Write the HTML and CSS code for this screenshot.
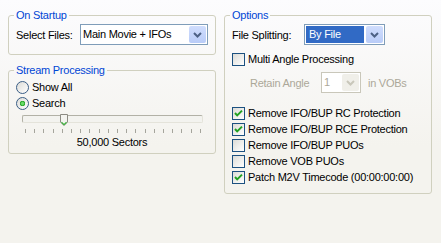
FILE: index.html
```html
<!DOCTYPE html>
<html>
<head>
    <meta charset="utf-8">
    <link rel="stylesheet" href="styles.css">
</head>
<body>
    <div class="page">
        <div class="col">
            <fieldset class="group startup">
                <legend>On Startup</legend>
                <div class="field">
                    <span class="field-label files-label">Select Files:</span>
                    <div class="combo files-combo">
                        <span class="combo-text">Main Movie + IFOs</span>
                        <span class="combo-btn">
                            <svg width="9" height="6" viewBox="0 0 9 6"><path d="M1 1 L4.5 4.5 L8 1" fill="none" stroke="#4D6185" stroke-width="2"/></svg>
                        </span>
                    </div>
                </div>
            </fieldset>

            <fieldset class="group stream">
                <legend>Stream Processing</legend>
                <div class="opt-row"><span class="radio"></span>Show All</div>
                <div class="opt-row"><span class="radio on"></span>Search</div>
                <div class="slider">
                    <div class="track">
                        <svg class="thumb" width="8" height="12" viewBox="0 0 8 12">
                            <path d="M0.5 0.5 H7.5 V8 L4 11.5 L0.5 8 Z" fill="#F4F4F0" stroke="#8C8B83"/>
                            <path d="M1.5 8.2 L4 10.6 L6.5 8.2" fill="none" stroke="#3FB13F" stroke-width="1.2"/>
                        </svg>
                    </div>
                    <div class="ticks">
                        <span></span><span></span><span></span><span></span><span></span>
                        <span></span><span></span><span></span><span></span><span></span>
                        <span></span><span></span><span></span><span></span><span></span>
                        <span></span><span></span><span></span><span></span><span></span>
                    </div>
                    <div class="caption">50,000 Sectors</div>
                </div>
            </fieldset>
        </div>

        <div class="col">
            <fieldset class="group options">
                <legend>Options</legend>
                <div class="field">
                    <span class="field-label split-label">File Splitting:</span>
                    <div class="combo split-combo">
                        <span class="combo-text"><span class="selected">By File</span></span>
                        <span class="combo-btn">
                            <svg width="9" height="6" viewBox="0 0 9 6"><path d="M1 1 L4.5 4.5 L8 1" fill="none" stroke="#4D6185" stroke-width="2"/></svg>
                        </span>
                    </div>
                </div>
                <div class="opt-row angle-row"><span class="check"></span>Multi Angle Processing</div>
                <div class="field retain-row">
                    <span class="field-label retain-label">Retain Angle</span>
                    <div class="combo angle-combo disabled">
                        <span class="combo-text">1</span>
                        <span class="combo-btn">
                            <svg width="9" height="6" viewBox="0 0 9 6"><path d="M1 1 L4.5 4.5 L8 1" fill="none" stroke="#C9C7BA" stroke-width="2"/></svg>
                        </span>
                    </div>
                    <span class="field-label vobs-label">in VOBs</span>
                </div>
                <div class="checks">
                    <div class="opt-row"><span class="check on"></span>Remove IFO/BUP RC Protection</div>
                    <div class="opt-row"><span class="check on"></span>Remove IFO/BUP RCE Protection</div>
                    <div class="opt-row"><span class="check"></span>Remove IFO/BUP PUOs</div>
                    <div class="opt-row"><span class="check"></span>Remove VOB PUOs</div>
                    <div class="opt-row"><span class="check on"></span>Patch M2V Timecode (00:00:00:00)</div>
                </div>
            </fieldset>
        </div>
    </div>
</body>
</html>
```

FILE: styles.css
```css
html,
body {
    margin: 0;
    width: 441px;
    height: 243px;
    background: linear-gradient(#FCFCFE, #F4F3EE 60%);
    font-family: "Liberation Sans", Arial, sans-serif;
    font-size: 11px;
    letter-spacing: -0.25px;
    color: #000;
}

.page {
    display: flex;
    gap: 8px;
    padding: 8px 0 0 8px;
}

.col {
    width: 208px;
    display: flex;
    flex-direction: column;
    gap: 8px;
}

.group {
    margin: 0;
    min-width: 0;
    padding: 2px 7px 9px 7px;
    border: 1px solid #D0D0BF;
    border-radius: 3px;
}
.group legend {
    color: #0046D5;
    line-height: 14px;
    padding: 0 2px;
    margin-left: -2px;
}

.stream {
    padding-bottom: 4px;
}
.options {
    padding-bottom: 8px;
}

/* label + combo rows */
.field {
    display: flex;
    align-items: center;
    height: 21px;
}
.field-label {
    flex: none;
}
.files-label { width: 64px; }
.split-label { width: 72px; }

.combo {
    height: 21px;
    box-sizing: border-box;
    border: 1px solid #7F9DB9;
    background: #fff;
    display: flex;
}
.files-combo { width: 129px; }
.split-combo { width: 81px; }

.combo-text {
    flex: 1;
    line-height: 19px;
    padding-left: 2px;
    white-space: nowrap;
    overflow: hidden;
}
.combo-btn {
    width: 17px;
    margin: 1px;
    border-radius: 2px;
    background: linear-gradient(#D0DDFD, #B9CCF8);
    display: flex;
    align-items: center;
    justify-content: center;
}

.selected {
    display: block;
    margin: 1px 1px 1px -1px;
    line-height: 17px;
    padding-left: 3px;
    background: #316AC5;
    color: #fff;
}

/* checkbox / radio rows */
.opt-row {
    display: flex;
    align-items: center;
    gap: 3px;
    height: 16px;
    white-space: nowrap;
}

.radio,
.check {
    flex: none;
    width: 13px;
    height: 13px;
    box-sizing: border-box;
    border: 1px solid #1C5180;
    background: linear-gradient(135deg, #DCDCD7, #FFFFFF);
}
.radio {
    border-radius: 50%;
    border-color: #3A5E86;
}
.radio.on {
    background:
        radial-gradient(circle, #6BDC6B 0 1px, #21A121 2.5px, transparent 3px),
        linear-gradient(135deg, #DCDCD7, #FFFFFF);
}
.check.on {
    background:
        url("data:image/svg+xml;utf8,<svg xmlns='http://www.w3.org/2000/svg' width='11' height='11'><path d='M2 5 L4.2 7.4 L9 2.6' fill='none' stroke='%2321A121' stroke-width='2'/></svg>") center / 11px 11px no-repeat,
        linear-gradient(135deg, #DCDCD7, #FFFFFF);
}

/* slider */
.slider {
    margin-top: 4px;
}
.track {
    position: relative;
    margin-left: 6px;
    width: 181px;
    height: 8px;
    box-sizing: border-box;
    border: 1px solid #B2B1A6;
    border-right-color: #E4E3DA;
    border-bottom-color: #E4E3DA;
    border-radius: 2px;
    background: #F3F3EF;
}
.thumb {
    position: absolute;
    left: 37px;
    top: -2px;
}
.ticks {
    display: flex;
    justify-content: space-between;
    width: 176px;
    height: 4px;
    margin: 6px 0 0 9px;
}
.ticks span {
    width: 1px;
    background: #A5A59C;
}
.caption {
    text-align: center;
    line-height: 14px;
    margin-top: 2px;
}

/* options */
.angle-row {
    margin-top: 6px;
}
.retain-row {
    margin-top: 5px;
    padding-left: 18px;
    color: #ACA899;
}
.retain-label { width: 71px; }
.angle-combo {
    width: 40px;
    border-color: #C9C7BA;
}
.angle-combo .combo-btn {
    background: #F0EFE9;
}
.vobs-label {
    margin-left: 7px;
}
.checks {
    margin-top: 12px;
}
```
